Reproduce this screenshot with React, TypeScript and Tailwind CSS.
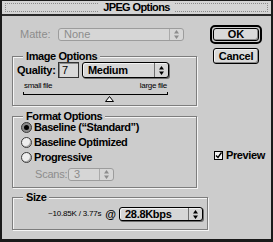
import React from 'react';
import clsx from 'clsx';

// little up/down arrows used by the classic popup menus
const Arrows: React.FC<{ dim?: boolean }> = ({ dim }) => (
  <svg width="5" height="9" viewBox="0 0 5 9" className="block">
    <path d="M2.5 0 L5 3.5 L0 3.5 Z M0 5.5 L5 5.5 L2.5 9 Z" fill={dim ? '#8c8c8c' : '#000'} />
  </svg>
);

interface PopupProps {
  label: string;
  className: string;
  disabled?: boolean;
  bold?: boolean;
}

const Popup: React.FC<PopupProps> = ({ label, className, disabled, bold }) => (
  <div
    className={clsx(
      'flex items-stretch rounded-[3px] border bg-[#d6d6d6]',
      disabled
        ? 'border-[#9c9c9c] text-[#8c8c8c]'
        : 'border-black text-black shadow-[1px_1px_0_#6f6f6f,inset_1px_1px_0_#f2f2f2]',
      className
    )}
  >
    <span
      className={clsx(
        'flex-1 pl-[5px] leading-none flex items-center',
        bold ? 'font-bold text-[11px] tracking-[-0.3px]' : 'text-[11px]'
      )}
    >
      {label}
    </span>
    <span
      className={clsx(
        'w-[14px] flex items-center justify-center border-l',
        disabled ? 'border-[#aaaaaa]' : 'border-[#6f6f6f]'
      )}
    >
      <Arrows dim={disabled} />
    </span>
  </div>
);

const Group: React.FC<{ title: string; className: string; children?: React.ReactNode }> = ({
  title,
  className,
  children,
}) => (
  <div
    className={clsx(
      'relative border border-[#7d7d7d] shadow-[inset_1px_1px_0_#f4f4f4,1px_1px_0_#f4f4f4]',
      className
    )}
  >
    <span className="absolute left-[10px] top-[-7px] bg-[#cccccc] px-[3px] text-[11px] font-bold leading-[12px] tracking-[-0.4px]">
      {title}
    </span>
    {children}
  </div>
);

const Radio: React.FC<{ label: string; checked?: boolean }> = ({ label, checked }) => (
  <div className="flex h-[15px] items-center pl-[8px]">
    <span
      className={clsx(
        'flex h-[11px] w-[11px] items-center justify-center rounded-full border border-[#3a3a3a]',
        checked ? 'bg-[#8a8a8a]' : 'bg-[#eeeeee] shadow-[inset_-1px_-1px_0_#a8a8a8]'
      )}
    >
      {checked && <span className="h-[5px] w-[5px] rounded-full bg-black" />}
    </span>
    <span className="ml-[2px] text-[11px] font-bold leading-none tracking-[-0.45px]">{label}</span>
  </div>
);

const JpegOptions: React.FC = () => {
  return (
    <div className="flex h-[242px] w-[273px] flex-col border-t border-l-2 border-r-2 border-b-[3px] border-[#1a1a1a] bg-[#cccccc] font-['Liberation_Sans',Arial,sans-serif] text-black select-none">
      {/* Title bar */}
      <div className="flex h-[15px] items-center border-b-2 border-[#2a2a2a] bg-[#d4d4d4] px-[3px]">
        <div className="h-[9px] flex-1 border-y border-l border-dotted border-[#8c8c8c]" />
        <span className="px-[5px] text-[11px] font-bold leading-none tracking-[-0.6px]">JPEG Options</span>
        <div className="h-[9px] flex-1 border-y border-r border-dotted border-[#8c8c8c]" />
      </div>

      <div className="flex flex-1">
        {/* Left column */}
        <div className="flex w-[206px] flex-col pl-[10px]">
          {/* Matte */}
          <div className="mt-[12px] flex h-[13px] items-center">
            <span className="ml-[8px] w-[38px] text-[11px] leading-none text-[#8c8c8c]">Matte:</span>
            <Popup label="None" disabled className="h-[13px] w-[126px]" />
          </div>

          {/* Image Options */}
          <Group title="Image Options" className="mt-[15px] h-[50px] w-[185px]">
            <div className="mt-[5px] flex h-[16px] items-center pl-[4px]">
              <span className="w-[41px] text-[11px] font-bold leading-none tracking-[-0.3px]">Quality:</span>
              <div className="flex h-[16px] w-[21px] items-center border border-[#333] bg-[#d9d9d9] pl-[3px] text-[11px] shadow-[inset_1px_1px_0_#8a8a8a]">
                7
              </div>
              <Popup label="Medium" bold className="ml-[3px] h-[16px] w-[87px]" />
            </div>
            <div className="mt-[3px] flex w-[154px] justify-between pl-[11px] text-[8px] leading-[9px] tracking-[-0.3px]">
              <span>small file</span>
              <span>large file</span>
            </div>
            <div className="ml-[10px] mt-[2px] h-[3px] w-[145px] border-x border-b border-black" />
            <div className="ml-[92px] mt-[1px]">
              <svg width="9" height="6" viewBox="0 0 9 6" className="block">
                <path d="M4.5 0.5 L8.5 5.5 L0.5 5.5 Z" fill="#f4f4f4" stroke="#000" strokeWidth="1" />
              </svg>
            </div>
          </Group>

          {/* Format Options */}
          <Group title="Format Options" className="mt-[10px] h-[72px] w-[185px]">
            <div className="mt-[3px] flex flex-col">
              <Radio label="Baseline (“Standard”)" checked />
              <Radio label="Baseline Optimized" />
              <Radio label="Progressive" />
              <div className="mt-[3px] flex h-[13px] items-center pl-[22px]">
                <span className="w-[33px] text-[11px] leading-none tracking-[-0.2px] text-[#8c8c8c]">Scans:</span>
                <Popup label="3" disabled className="h-[13px] w-[46px]" />
              </div>
            </div>
          </Group>

          {/* Size */}
          <Group title="Size" className="mt-[9px] h-[33px] w-[196px]">
            <div className="mt-[9px] flex h-[14px] items-center pl-[35px]">
              <span className="text-[8px] leading-none tracking-[-0.2px]">~10.85K / 3.77s</span>
              <span className="ml-[4px] text-[11px] font-bold leading-none">@</span>
              <Popup label="28.8Kbps" bold className="ml-[3px] h-[14px] w-[84px]" />
            </div>
          </Group>
        </div>

        {/* Right column */}
        <div className="flex flex-col pl-[2px]">
          <div className="mt-[9px] w-[52px] rounded-[5px] border-2 border-black p-[1px]">
            <button className="flex h-[13px] w-full items-center justify-center rounded-[3px] border border-black bg-[#dadada] text-[11px] font-bold leading-none shadow-[inset_-1px_-1px_0_#8a8a8a]">
              OK
            </button>
          </div>
          <button className="ml-[3px] mt-[4px] flex h-[16px] w-[46px] items-center justify-center rounded-[3px] border border-black bg-[#dadada] text-[11px] font-bold leading-none tracking-[-0.3px] shadow-[inset_-1px_-1px_0_#8a8a8a,inset_1px_1px_0_#f2f2f2]">
            Cancel
          </button>
          <div className="ml-[4px] mt-[86px] flex h-[11px] items-center">
            <span className="flex h-[9px] w-[9px] items-center justify-center border border-black bg-[#f2f2f2]">
              <svg width="7" height="7" viewBox="0 0 7 7" className="block">
                <path d="M1 3.5 L3 5.5 L6.5 0.5" fill="none" stroke="#000" strokeWidth="1.4" />
              </svg>
            </span>
            <span className="ml-[3px] text-[11px] font-bold leading-none tracking-[-0.4px]">Preview</span>
          </div>
        </div>
      </div>
    </div>
  );
};

export default function App() {
  return <JpegOptions />;
}
